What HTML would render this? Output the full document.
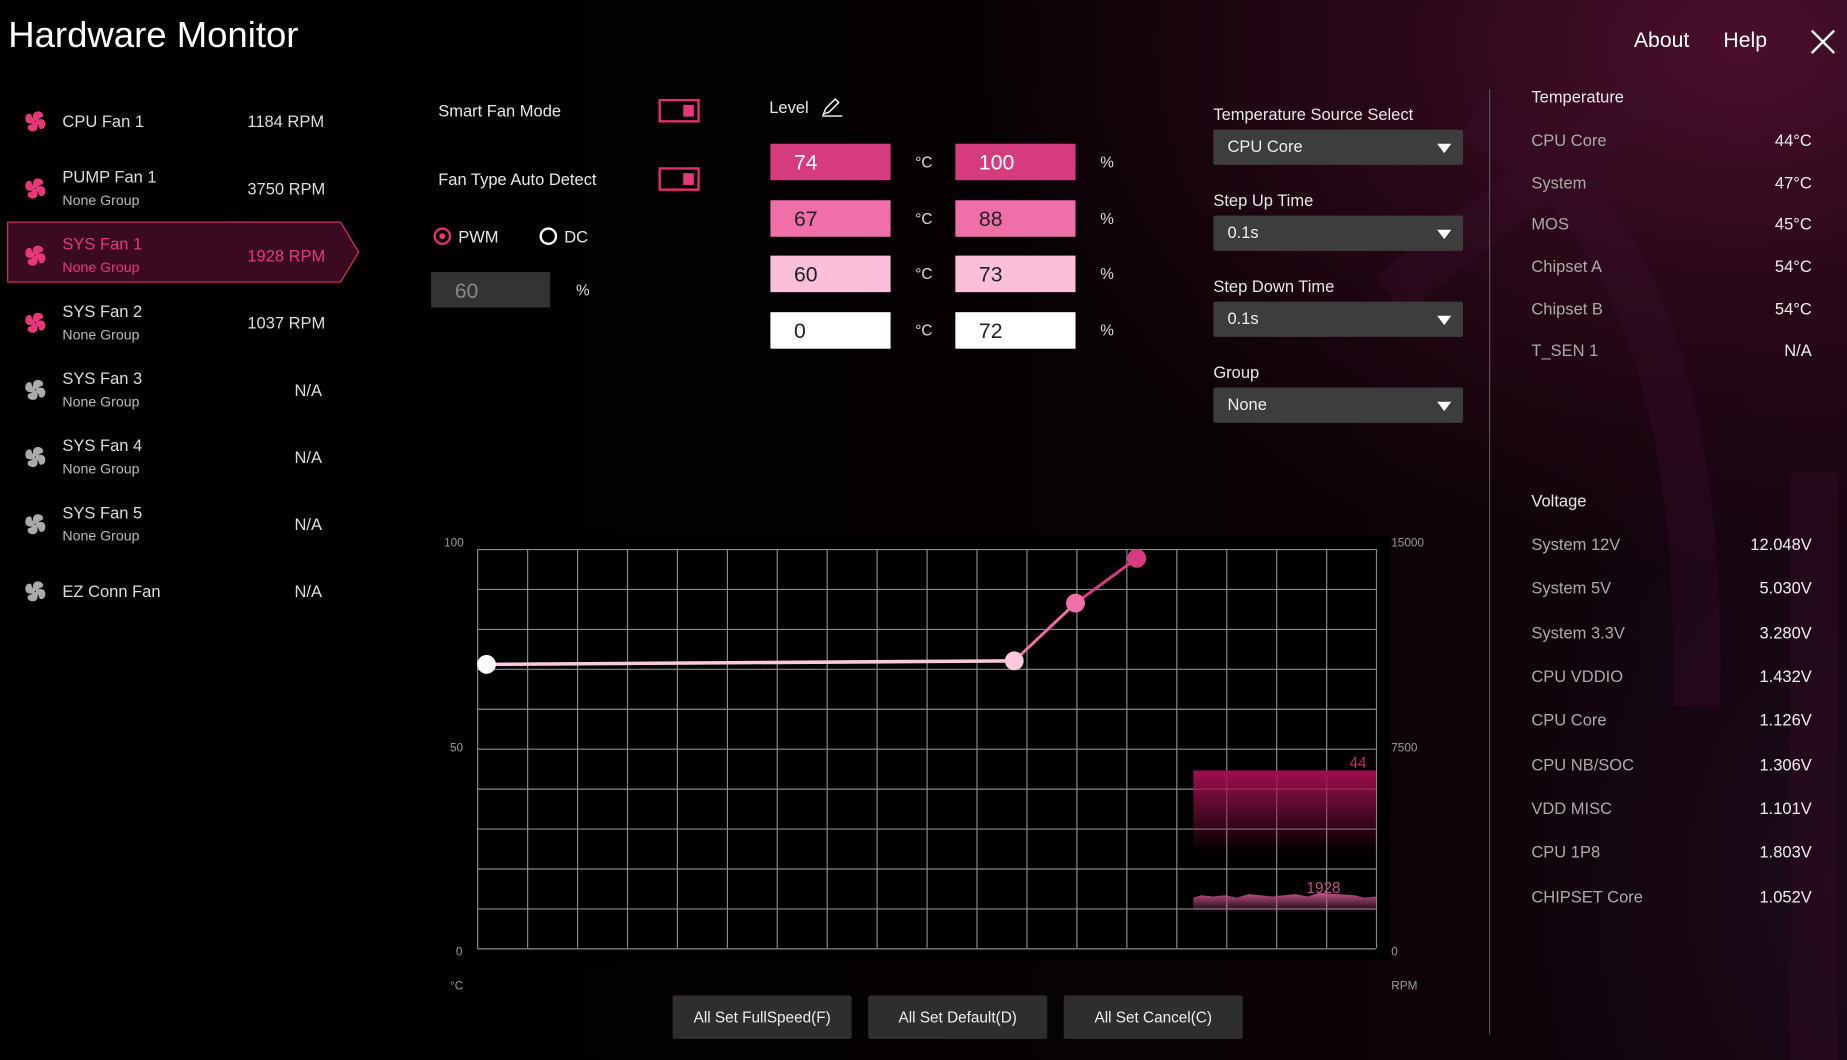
<!DOCTYPE html>
<html><head><meta charset="utf-8"><style>
html,body{margin:0;padding:0;width:1847px;height:1060px;overflow:hidden;background:#000}
#w{position:absolute;left:0;top:0;width:1568px;height:900px;transform:scale(1.178);transform-origin:0 0;font-family:"Liberation Sans",sans-serif;color:#ddd;
background:radial-gradient(ellipse 650px 450px at 1480px 40px,#4a0f2c 0%,#2a0818 45%,rgba(0,0,0,0) 100%),radial-gradient(ellipse 400px 600px at 1568px 750px,#1c0a1a 0%,rgba(0,0,0,0) 80%),linear-gradient(90deg,#000 0%,#050103 50%,#12040b 100%)}
.a{position:absolute;white-space:nowrap}
.t{font-size:14px;color:#e8e8e8}
.fan .n{font-size:14px;color:#ddd}
.fan .g{font-size:12px;color:#bbb}
.box{position:absolute;width:102px;height:31px;font-size:18px;line-height:33px;text-indent:20px}
.u{position:absolute;font-size:13px;color:#ddd}
.sel{position:absolute;left:1030px;width:212px;height:30px;background:#3d3d3d;border-radius:2px;font-size:14px;line-height:28px;text-indent:12px;color:#eee}
.sel:after{content:"";position:absolute;right:10px;top:12px;border-left:6px solid transparent;border-right:6px solid transparent;border-top:8px solid #fff}
.rl{position:absolute;left:1300px;font-size:14px;color:#aaa}
.rv{position:absolute;right:30px;font-size:14px;color:#eee;text-align:right}
.btn{position:absolute;top:845px;width:152px;height:37px;background:#2e2e2e;border-radius:2px;font-size:13px;line-height:37px;text-align:center;color:#eee}
.ax{position:absolute;font-size:10px;color:#999}
</style></head><body><div id="w">
<svg class="a" style="left:1100px;top:0" width="468" height="900" viewBox="1100 0 468 900"><g fill="none" stroke="#3a0f2a" stroke-width="40" opacity=".35"><path d="M1180 250 L1400 80"/><path d="M1540 400 L1540 900"/><path d="M1250 100 Q1450 200 1440 600"/></g></svg>
<div class="a" style="left:7px;top:12px;font-size:31px;color:#fff">Hardware Monitor</div>
<div class="a" style="left:1387px;top:24px;font-size:18px;color:#fff">About</div>
<div class="a" style="left:1463px;top:24px;font-size:18px;color:#fff">Help</div>
<svg class="a" style="left:1537px;top:25px" width="21" height="21"><path d="M1 1L20 20M20 1L1 20" stroke="#fff" stroke-width="2"/></svg>

<svg class="a" style="left:6px;top:188px" width="300" height="52"><path d="M0.5 0.5H283L298.5 26L283 51.5H0.5Z" fill="#3a0a20" stroke="#e0306f"/></svg>
<svg width="0" height="0" style="position:absolute"><defs><g id="fi"><g id="p"><path d="M-1 -1 C-3 -4 -2 -8.5 2 -8.5 C6 -8.5 7.5 -5.5 6 -3.5 C4 -3 2 -2 1 0Z"/></g><use href="#p" transform="rotate(90)"/><use href="#p" transform="rotate(180)"/><use href="#p" transform="rotate(270)"/></g></defs></svg>
<div class="fan">
<svg class="a" style="left:20px;top:93px" width="20" height="20" viewBox="-10 -10 20 20" fill="#e8387a"><use href="#fi"/></svg>
<div class="a n" style="left:53px;top:95px">CPU Fan 1</div><div class="a n" style="left:210px;top:95px">1184 RPM</div>
<svg class="a" style="left:20px;top:150px" width="20" height="20" viewBox="-10 -10 20 20" fill="#e8387a"><use href="#fi"/></svg>
<div class="a n" style="left:53px;top:142px">PUMP Fan 1</div><div class="a g" style="left:53px;top:163px">None Group</div><div class="a n" style="left:210px;top:152px">3750 RPM</div>
<svg class="a" style="left:20px;top:207px" width="20" height="20" viewBox="-10 -10 20 20" fill="#e8387a"><use href="#fi"/></svg>
<div class="a n" style="left:53px;top:199px;color:#e8387a">SYS Fan 1</div><div class="a g" style="left:53px;top:220px;color:#e8387a">None Group</div><div class="a n" style="left:210px;top:209px;color:#e8387a">1928 RPM</div>
<svg class="a" style="left:20px;top:264px" width="20" height="20" viewBox="-10 -10 20 20" fill="#e8387a"><use href="#fi"/></svg>
<div class="a n" style="left:53px;top:256px">SYS Fan 2</div><div class="a g" style="left:53px;top:277px">None Group</div><div class="a n" style="left:210px;top:266px">1037 RPM</div>
<svg class="a" style="left:20px;top:321px" width="20" height="20" viewBox="-10 -10 20 20" fill="#aaa"><use href="#fi"/></svg>
<div class="a n" style="left:53px;top:313px">SYS Fan 3</div><div class="a g" style="left:53px;top:334px">None Group</div><div class="a n" style="left:250px;top:323px">N/A</div>
<svg class="a" style="left:20px;top:378px" width="20" height="20" viewBox="-10 -10 20 20" fill="#aaa"><use href="#fi"/></svg>
<div class="a n" style="left:53px;top:370px">SYS Fan 4</div><div class="a g" style="left:53px;top:391px">None Group</div><div class="a n" style="left:250px;top:380px">N/A</div>
<svg class="a" style="left:20px;top:435px" width="20" height="20" viewBox="-10 -10 20 20" fill="#aaa"><use href="#fi"/></svg>
<div class="a n" style="left:53px;top:427px">SYS Fan 5</div><div class="a g" style="left:53px;top:448px">None Group</div><div class="a n" style="left:250px;top:437px">N/A</div>
<svg class="a" style="left:20px;top:492px" width="20" height="20" viewBox="-10 -10 20 20" fill="#aaa"><use href="#fi"/></svg>
<div class="a n" style="left:53px;top:494px">EZ Conn Fan</div><div class="a n" style="left:250px;top:494px">N/A</div>
</div>

<div class="a t" style="left:372px;top:86px">Smart Fan Mode</div>
<div class="a" style="left:559px;top:84px;width:31px;height:16px;border:2px solid #e0306f"><div style="position:absolute;right:3px;top:3px;width:9px;height:10px;background:#e8387a"></div></div>
<div class="a t" style="left:372px;top:144px">Fan Type Auto Detect</div>
<div class="a" style="left:559px;top:142px;width:31px;height:16px;border:2px solid #e0306f"><div style="position:absolute;right:3px;top:3px;width:9px;height:10px;background:#e8387a"></div></div>
<div class="a" style="left:368px;top:193px;width:11px;height:11px;border:2px solid #e0306f;border-radius:50%"><div style="margin:3px;width:5px;height:5px;border-radius:50%;background:#e8387a"></div></div>
<div class="a t" style="left:389px;top:193px">PWM</div>
<div class="a" style="left:458px;top:193px;width:11px;height:11px;border:2px solid #fff;border-radius:50%"></div>
<div class="a t" style="left:479px;top:193px">DC</div>
<div class="box" style="left:366px;top:231px;width:101px;height:30px;background:#333;color:#888">60</div>
<div class="u" style="left:489px;top:239px">%</div>

<div class="a t" style="left:653px;top:83px">Level</div>
<svg class="a" style="left:697px;top:82px" width="20" height="18"><path d="M2 15L4 10L12 2L15 5L7 13Z M1 16.5H18" fill="none" stroke="#fff" stroke-width="1.2"/></svg>
<div class="box" style="left:654px;top:122px;background:#d63b7e;color:#fff">74</div>
<div class="box" style="left:654px;top:170px;background:#f06fa8;color:#222">67</div>
<div class="box" style="left:654px;top:217px;background:#fbbfd9;color:#222">60</div>
<div class="box" style="left:654px;top:265px;background:#fff;color:#222">0</div>
<div class="box" style="left:811px;top:122px;background:#d63b7e;color:#fff">100</div>
<div class="box" style="left:811px;top:170px;background:#f06fa8;color:#222">88</div>
<div class="box" style="left:811px;top:217px;background:#fbbfd9;color:#222">73</div>
<div class="box" style="left:811px;top:265px;background:#fff;color:#222">72</div>
<div class="u" style="left:777px;top:130px">°C</div><div class="u" style="left:777px;top:178px">°C</div><div class="u" style="left:777px;top:225px">°C</div><div class="u" style="left:777px;top:273px">°C</div>
<div class="u" style="left:934px;top:130px">%</div><div class="u" style="left:934px;top:178px">%</div><div class="u" style="left:934px;top:225px">%</div><div class="u" style="left:934px;top:273px">%</div>

<div class="a t" style="left:1030px;top:89px">Temperature Source Select</div>
<div class="sel" style="top:110px">CPU Core</div>
<div class="a t" style="left:1030px;top:162px">Step Up Time</div>
<div class="sel" style="top:183px">0.1s</div>
<div class="a t" style="left:1030px;top:235px">Step Down Time</div>
<div class="sel" style="top:256px">0.1s</div>
<div class="a t" style="left:1030px;top:308px">Group</div>
<div class="sel" style="top:329px">None</div>

<div class="a" style="left:1264px;top:76px;width:1px;height:802px;background:#555"></div>
<div class="a t" style="left:1300px;top:74px">Temperature</div>
<div class="rl" style="top:111px">CPU Core</div><div class="rv" style="top:111px">44°C</div>
<div class="rl" style="top:147px">System</div><div class="rv" style="top:147px">47°C</div>
<div class="rl" style="top:182px">MOS</div><div class="rv" style="top:182px">45°C</div>
<div class="rl" style="top:218px">Chipset A</div><div class="rv" style="top:218px">54°C</div>
<div class="rl" style="top:254px">Chipset B</div><div class="rv" style="top:254px">54°C</div>
<div class="rl" style="top:289px">T_SEN 1</div><div class="rv" style="top:289px">N/A</div>
<div class="a t" style="left:1300px;top:417px">Voltage</div>
<div class="rl" style="top:454px">System 12V</div><div class="rv" style="top:454px">12.048V</div>
<div class="rl" style="top:491px">System 5V</div><div class="rv" style="top:491px">5.030V</div>
<div class="rl" style="top:529px">System 3.3V</div><div class="rv" style="top:529px">3.280V</div>
<div class="rl" style="top:566px">CPU VDDIO</div><div class="rv" style="top:566px">1.432V</div>
<div class="rl" style="top:603px">CPU Core</div><div class="rv" style="top:603px">1.126V</div>
<div class="rl" style="top:641px">CPU NB/SOC</div><div class="rv" style="top:641px">1.306V</div>
<div class="rl" style="top:678px">VDD MISC</div><div class="rv" style="top:678px">1.101V</div>
<div class="rl" style="top:715px">CPU 1P8</div><div class="rv" style="top:715px">1.803V</div>
<div class="rl" style="top:753px">CHIPSET Core</div><div class="rv" style="top:753px">1.052V</div>

<div class="a" style="left:395px;top:455px;width:785px;height:360px;background:#000"></div>
<svg class="a" style="left:0;top:0" width="1568" height="900">
<defs><linearGradient id="tg" x1="0" y1="0" x2="0" y2="1"><stop offset="0" stop-color="#a0104e"/><stop offset="1" stop-color="#a0104e" stop-opacity="0"/></linearGradient>
<linearGradient id="rg" x1="0" y1="0" x2="0" y2="1"><stop offset="0" stop-color="#c05088"/><stop offset="1" stop-color="#c05088" stop-opacity="0"/></linearGradient></defs>
<g stroke="#8a8a8a" stroke-width="1">
<path d="M405.5 466V805M447.9 466V805M490.3 466V805M532.7 466V805M575 466V805M617.5 466V805M659.8 466V805M702.2 466V805M744.6 466V805M787 466V805M829.4 466V805M871.8 466V805M914.2 466V805M956.6 466V805M999 466V805M1041.4 466V805M1083.8 466V805M1126.2 466V805M1168.5 466V805"/>
<path d="M405 466.5H1168M405 500.4H1168M405 534.3H1168M405 568.2H1168M405 602.1H1168M405 636H1168M405 669.9H1168M405 703.8H1168M405 737.7H1168M405 771.6H1168M405 805.5H1168"/>
</g>
<rect x="1013" y="654" width="155" height="70" fill="url(#tg)"/>
<path d="M1013 762 L1020 760 1030 761 1040 760 1050 762 1060 759 1070 760 1080 761 1090 760 1100 759 1110 761 1120 758 1135 759 1150 760 1158 762 1168 761 V775 H1013Z" fill="url(#rg)"/>
<text x="1160" y="652" fill="#c02868" font-size="13" text-anchor="end" font-family="Liberation Sans">44</text>
<text x="1138" y="758" fill="#c05088" font-size="13" text-anchor="end" font-family="Liberation Sans">1928</text>
<path d="M413 564 L861 561" stroke="#fbc8de" stroke-width="3"/>
<path d="M861 561 L913 512" stroke="#f06fa8" stroke-width="2.5"/>
<path d="M913 512 L965 474" stroke="#d63b7e" stroke-width="2.5"/>
<circle cx="413" cy="564" r="8" fill="#fff"/><circle cx="861" cy="561" r="8" fill="#fbc8de"/><circle cx="913" cy="512" r="8" fill="#f06fa8"/><circle cx="965" cy="474" r="8" fill="#d63b7e"/>
</svg>
<div class="ax" style="left:377px;top:456px">100</div><div class="ax" style="left:382px;top:630px">50</div><div class="ax" style="left:387px;top:803px">0</div><div class="ax" style="left:382px;top:832px">°C</div>
<div class="ax" style="left:1181px;top:456px">15000</div><div class="ax" style="left:1181px;top:630px">7500</div><div class="ax" style="left:1181px;top:803px">0</div><div class="ax" style="left:1181px;top:832px">RPM</div>
<div class="btn" style="left:571px">All Set FullSpeed(F)</div>
<div class="btn" style="left:737px">All Set Default(D)</div>
<div class="btn" style="left:903px">All Set Cancel(C)</div>
</div></body></html>
